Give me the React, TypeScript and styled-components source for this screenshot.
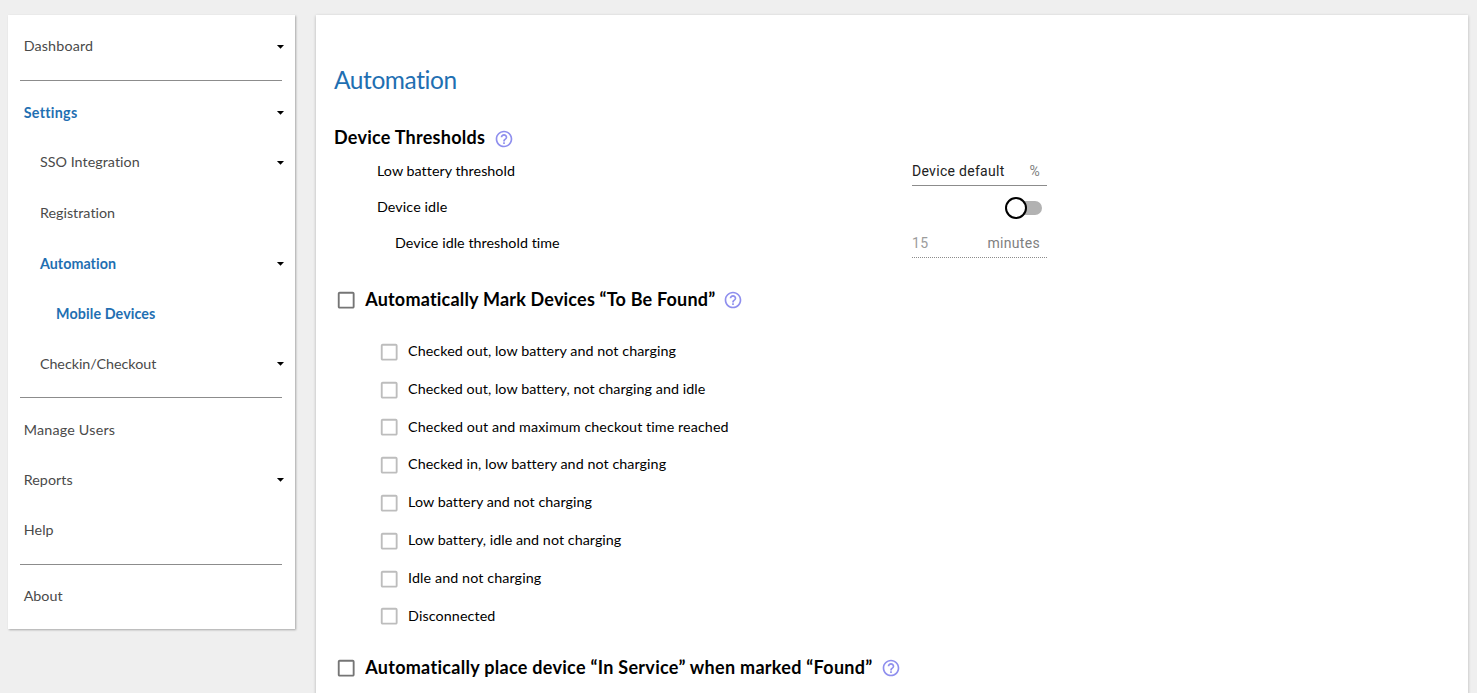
import React from 'react';
import styled, { createGlobalStyle } from 'styled-components';
import { MdArrowDropDown, MdCheckBoxOutlineBlank, MdHelpOutline } from 'react-icons/md';

const GlobalStyle = createGlobalStyle`
  *, *::before, *::after { box-sizing: border-box; }
  html, body { margin: 0; height: 100%; overflow: hidden; background: #efefef; }
  body { font-family: Lato, "Liberation Sans", sans-serif; color: #000; font-variant-ligatures: none; }
  #root { height: 100%; }
`;

const Page = styled.div`
  display: flex;
  align-items: flex-start;
  gap: 21px;
  height: 693px;
  width: 1477px;
  padding: 15px 9px 0 8px;
  overflow: hidden;
`;

const Sidebar = styled.nav`
  flex: none;
  width: 287px;
  height: 614px;
  padding-top: 6.2px;
  background: #fff;
  box-shadow: 1px 1px 2px rgba(0, 0, 0, 0.3);
`;

const NavRow = styled.a<{ $level: number; $active?: boolean }>`
  display: flex;
  align-items: center;
  justify-content: space-between;
  height: 50.35px;
  padding: 0 6.5px 0 ${(p) => 15.7 + p.$level * 16.2}px;
  font-size: 14.3px;
  font-weight: ${(p) => (p.$active ? 700 : 400)};
  color: ${(p) => (p.$active ? '#1f6fb2' : '#4a4a4a')};
`;

const NavLabel = styled.span<{ $spacing: number; $active?: boolean }>`
  padding-bottom: ${(p) => (p.$active ? 0 : 1)}px;
  letter-spacing: ${(p) => p.$spacing}px;
  white-space: nowrap;
`;

const NavCaret = styled(MdArrowDropDown)`
  width: 17px;
  height: 17px;
  color: #000;
`;

const NavDivider = styled.hr`
  width: 262px;
  height: 1px;
  margin: 8.2px 0 6.2px 12px;
  border: 0;
  background: #8c8c8c;
`;

const Panel = styled.main`
  flex: none;
  width: 1152px;
  height: 700px;
  padding: 45px 18px 0;
  background: #fff;
  box-shadow: 0 1px 3px rgba(0, 0, 0, 0.25);
`;

const Title = styled.h1`
  margin: 0;
  height: 40px;
  line-height: 40px;
  font-size: 24.5px;
  font-weight: 400;
  letter-spacing: -0.42px;
  color: #1f6fb2;
`;

const SectionHeader = styled.div<{ $top: number; $gap: number }>`
  display: flex;
  align-items: center;
  height: 30px;
  margin-top: ${(p) => p.$top}px;
  gap: ${(p) => p.$gap}px;
`;

const SectionTitle = styled.h2<{ $spacing: number; $lift?: number }>`
  margin: 0;
  line-height: 26px;
  padding-bottom: ${(p) => p.$lift ?? 2}px;
  font-size: 18px;
  font-weight: 700;
  letter-spacing: ${(p) => p.$spacing}px;
  white-space: nowrap;
`;

const HelpIcon = styled(MdHelpOutline)`
  flex: none;
  width: 20px;
  height: 20px;
  color: #8f8fee;
`;

const SettingRow = styled.div<{ $indent: number }>`
  display: flex;
  align-items: center;
  justify-content: space-between;
  width: 713px;
  height: 36px;
  padding-left: ${(p) => p.$indent}px;
`;

const Label = styled.span<{ $spacing: number }>`
  padding-bottom: 3px;
  font-size: 14.3px;
  letter-spacing: ${(p) => p.$spacing}px;
  white-space: nowrap;
`;

const Field = styled.div<{ $disabled?: boolean }>`
  display: flex;
  align-items: center;
  justify-content: space-between;
  width: 135px;
  height: 29px;
  margin-bottom: 2px;
  padding-right: 7px;
  border-bottom: 1px ${(p) => (p.$disabled ? 'dotted' : 'solid')} #8c8c8c;
  font-family: Roboto, sans-serif;
  font-size: 14px;
  letter-spacing: 0.3px;
  color: ${(p) => (p.$disabled ? '#9c9c9c' : '#212121')};
`;

const Unit = styled.span`
  color: #808080;
`;

const Switch = styled.span`
  display: flex;
  align-items: center;
  width: 34px;
  height: 14px;
  margin-right: 5px;
  border-radius: 7px;
  background: #b2b2b2;
`;

const Thumb = styled.span`
  flex: none;
  width: 22px;
  height: 22px;
  margin-left: -3px;
  border: 2px solid #000;
  border-radius: 50%;
  background: #fff;
`;

const CheckIcon = styled(MdCheckBoxOutlineBlank)<{ $muted?: boolean }>`
  flex: none;
  width: 22.4px;
  height: 22.4px;
  color: ${(p) => (p.$muted ? '#bdbdbd' : '#757575')};
`;

const SectionCheck = styled(CheckIcon)`
  margin-left: 0.8px;
`;

const CheckList = styled.div`
  padding: 18.1px 0 0 44px;
`;

const CheckRow = styled.label`
  display: flex;
  align-items: center;
  gap: 7.7px;
  height: 37.8px;
`;

type NavItem = { label: string; level?: number; active?: boolean; caret?: boolean; spacing?: number };

const navGroups: NavItem[][] = [
  [{ label: 'Dashboard', caret: true, spacing: 0.15 }],
  [
    { label: 'Settings', active: true, caret: true, spacing: 0.28 },
    { label: 'SSO Integration', level: 1, caret: true, spacing: 0.04 },
    { label: 'Registration', level: 1, spacing: 0.02 },
    { label: 'Automation', level: 1, active: true, caret: true, spacing: 0.05 },
    { label: 'Mobile Devices', level: 2, active: true, spacing: 0.1 },
    { label: 'Checkin/Checkout', level: 1, caret: true, spacing: -0.03 },
  ],
  [{ label: 'Manage Users', spacing: 0.2 }, { label: 'Reports', caret: true, spacing: 0.05 }, { label: 'Help' }],
  [{ label: 'About', spacing: 0 }],
];

const conditions: { label: string; spacing?: number }[] = [
  { label: 'Checked out, low battery and not charging' },
  { label: 'Checked out, low battery, not charging and idle' },
  { label: 'Checked out and maximum checkout time reached', spacing: 0.09 },
  { label: 'Checked in, low battery and not charging' },
  { label: 'Low battery and not charging', spacing: 0.04 },
  { label: 'Low battery, idle and not charging', spacing: 0.04 },
  { label: 'Idle and not charging', spacing: 0.1 },
  { label: 'Disconnected', spacing: 0.1 },
];

export default function App() {
  return (
    <>
      <GlobalStyle />
      <Page>
        <Sidebar>
          {navGroups.map((group, i) => (
            <React.Fragment key={i}>
              {i > 0 && <NavDivider />}
              {group.map((item) => (
                <NavRow key={item.label} $level={item.level ?? 0} $active={item.active}>
                  <NavLabel $spacing={item.spacing ?? 0.1} $active={item.active}>
                    {item.label}
                  </NavLabel>
                  {item.caret && <NavCaret />}
                </NavRow>
              ))}
            </React.Fragment>
          ))}
        </Sidebar>
        <Panel>
          <Title>Automation</Title>
          <SectionHeader $top={24} $gap={9}>
            <SectionTitle $spacing={0.25} $lift={4}>Device Thresholds</SectionTitle>
            <HelpIcon />
          </SectionHeader>
          <SettingRow $indent={43}>
            <Label $spacing={0.03}>Low battery threshold</Label>
            <Field>
              Device default<Unit>%</Unit>
            </Field>
          </SettingRow>
          <SettingRow $indent={43}>
            <Label $spacing={0.1}>Device idle</Label>
            <Switch>
              <Thumb />
            </Switch>
          </SettingRow>
          <SettingRow $indent={61}>
            <Label $spacing={0.04}>Device idle threshold time</Label>
            <Field $disabled>
              15<Unit>minutes</Unit>
            </Field>
          </SettingRow>
          <SectionHeader $top={23} $gap={8}>
            <SectionCheck />
            <SectionTitle $spacing={0.2}>Automatically Mark Devices “To Be Found”</SectionTitle>
            <HelpIcon />
          </SectionHeader>
          <CheckList>
            {conditions.map((c) => (
              <CheckRow key={c.label}>
                <CheckIcon $muted />
                <Label $spacing={c.spacing ?? 0.06}>{c.label}</Label>
              </CheckRow>
            ))}
          </CheckList>
          <SectionHeader $top={17.5} $gap={8}>
            <SectionCheck />
            <SectionTitle $spacing={0.29}>Automatically place device “In Service” when marked “Found”</SectionTitle>
            <HelpIcon />
          </SectionHeader>
        </Panel>
      </Page>
    </>
  );
}
